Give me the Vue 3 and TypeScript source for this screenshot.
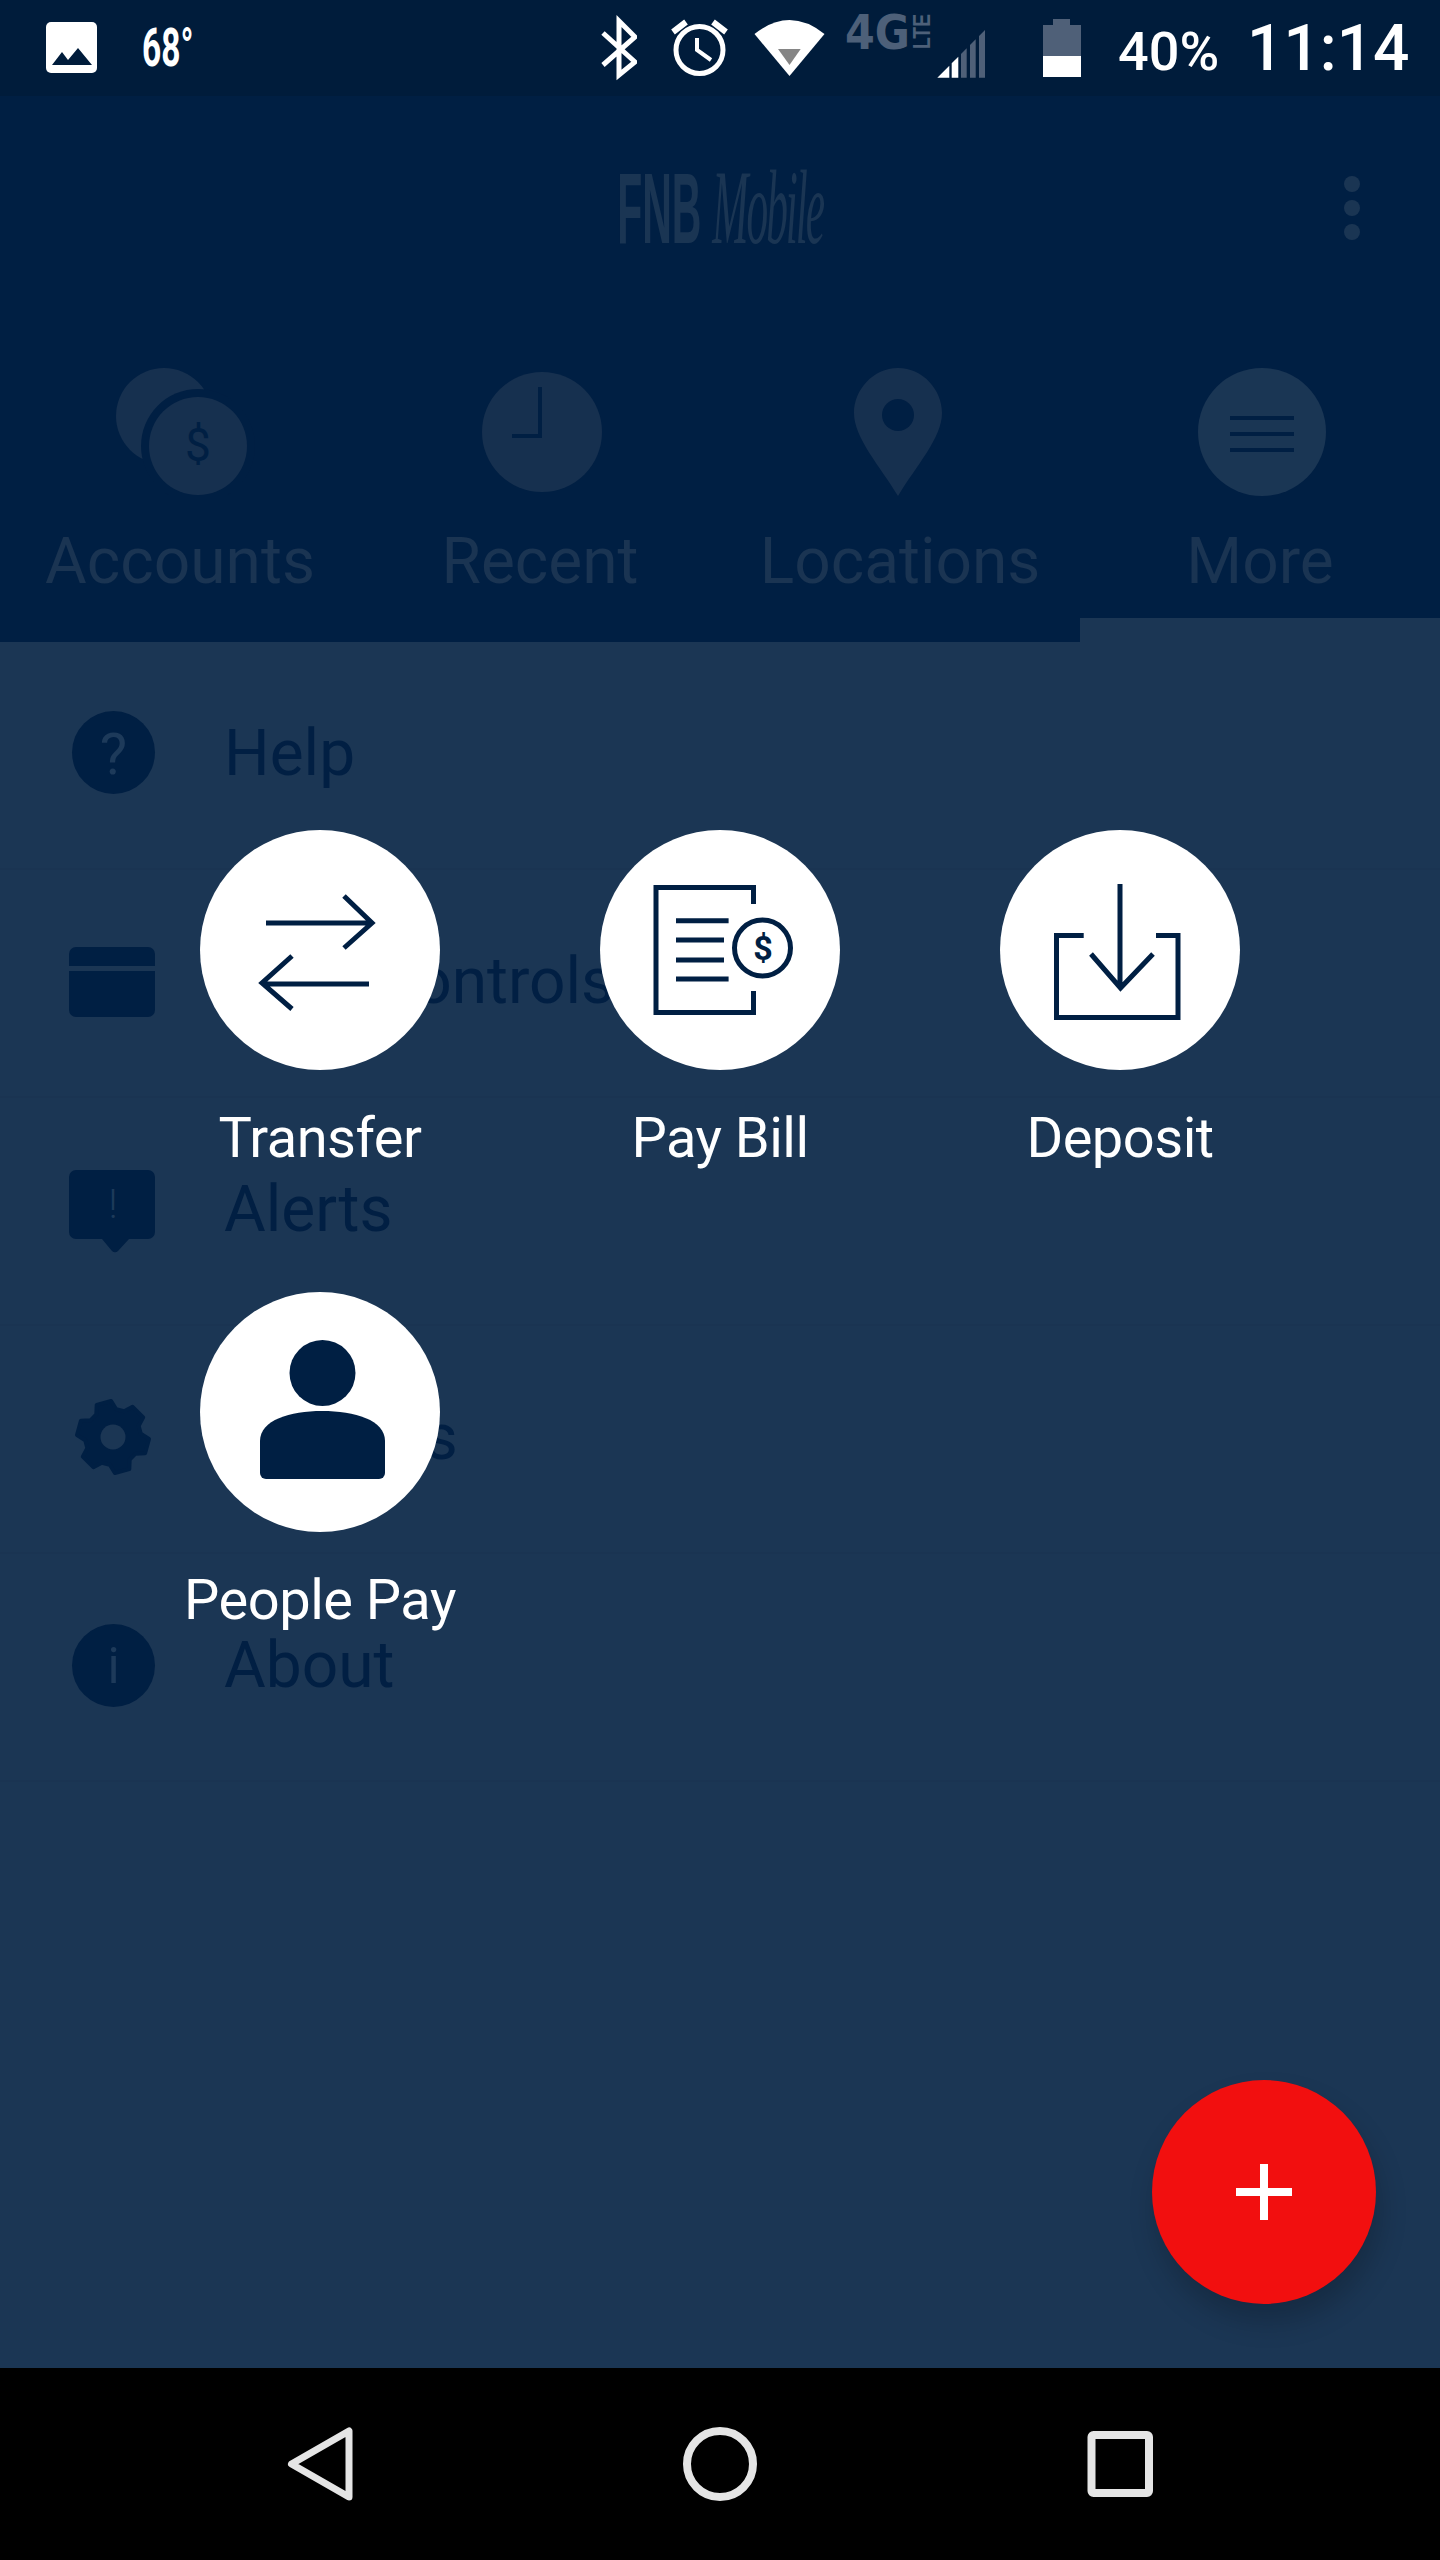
<script setup lang="ts">
interface Action {
  label: string;
}

const actions: Action[] = [
  { label: "Transfer" },
  { label: "Pay Bill" },
  { label: "Deposit" },
  { label: "People Pay" },
];

function gearPath(cx: number, cy: number, outer: number, inner: number, teeth: number, offset: number): string {
  const step = 360 / teeth;
  const points: string[] = [];
  for (let i = 0; i < teeth; i++) {
    const a = offset + i * step;
    const stops: [number, number][] = [
      [a - step * 0.36, inner],
      [a - step * 0.2, outer],
      [a + step * 0.2, outer],
      [a + step * 0.36, inner],
    ];
    for (const [deg, r] of stops) {
      const rad = (deg * Math.PI) / 180;
      points.push(`${(cx + r * Math.cos(rad)).toFixed(1)} ${(cy + r * Math.sin(rad)).toFixed(1)}`);
    }
  }
  return `M${points.join(" L")} Z`;
}

const gear = gearPath(113, 1437, 36, 28, 6, 15);
</script>

<template>
  <div class="screen">
    <header class="status">
      <svg class="s-photo" width="51" height="96" viewBox="46 0 51 96">
        <rect x="46" y="22" width="51" height="51" rx="5" fill="#fff" />
        <path d="M52 65 L62 52 L68 60 L78 48 L92 65 Z" fill="#001c3b" />
      </svg>
      <span class="temp">68°</span>
      <span class="status-gap"></span>
      <svg class="s-bt" width="36" height="96" viewBox="601 0 36 96">
        <path d="M603 33 L635 62 L619 75 L619 21 L635 37 L603 65" fill="none" stroke="#fff" stroke-width="5" />
      </svg>
      <svg class="s-alarm" width="58" height="96" viewBox="670 0 58 96">
        <circle cx="699.5" cy="50" r="23.5" fill="none" stroke="#fff" stroke-width="5" />
        <path d="M697 38 V50 L711 60" fill="none" stroke="#fff" stroke-width="4" />
        <path d="M673 32 L686 22 M713 22 L726 32" fill="none" stroke="#fff" stroke-width="6" />
      </svg>
      <svg class="s-wifi" width="72" height="96" viewBox="754 0 72 96">
        <path d="M754.5 34 Q789.5 6 824.5 34 L789.5 76 Z" fill="#fff" />
        <path d="M778 49 H800.7 L789.5 65 Z" fill="#858585" />
      </svg>
      <svg class="s-net" width="142" height="96" viewBox="844 0 142 96">
        <text x="845" y="49" class="net-main" textLength="65" lengthAdjust="spacingAndGlyphs">4G</text>
        <text transform="translate(930 49) rotate(-90)" class="net-sub" textLength="35" lengthAdjust="spacingAndGlyphs">LTE</text>
        <path d="M937.3 77.7 L949.3 65.7 V77.7 Z M951.7 63.3 L958.3 56.7 V77.7 H951.7 Z" fill="#fff" />
        <path d="M961 54 L966.7 48.3 V77.7 H961 Z M970 45 L975.7 39.3 V77.7 H970 Z M979 36 L985 30 V77.7 H979 Z" fill="#4f6078" />
      </svg>
      <svg class="s-batt" width="38" height="96" viewBox="1043 0 38 96">
        <path d="M1053 19 H1070 V25 H1081 V56 H1043 V25 H1053 Z" fill="#4f6078" />
        <rect x="1043" y="56" width="38" height="21" fill="#fff" />
      </svg>
      <span class="pct">40%</span>
      <span class="clock">11:14</span>
    </header>

    <main class="main">
      <div class="topbar">
        <span class="brand"><span class="brand-a">FNB</span> <span class="brand-b">Mobile</span></span>
        <span class="dots"><i></i><i></i><i></i></span>
      </div>

      <nav class="tabs">
        <div class="tab">
          <svg width="360" height="128" viewBox="0 368 360 128">
            <circle cx="164" cy="416" r="48" fill="#16304f" />
            <circle cx="198" cy="446" r="57" fill="#001f43" />
            <circle cx="198" cy="446" r="49" fill="#16304f" />
            <text x="198" y="461" class="coin-d">$</text>
          </svg>
          <span class="tab-label">Accounts</span>
        </div>
        <div class="tab">
          <svg width="360" height="128" viewBox="360 368 360 128">
            <circle cx="542" cy="432" r="60" fill="#16304f" />
            <path d="M540 387 V436 H512" fill="none" stroke="#001f43" stroke-width="4" />
          </svg>
          <span class="tab-label">Recent</span>
        </div>
        <div class="tab">
          <svg width="360" height="128" viewBox="720 368 360 128">
            <path d="M898 368 C873 368 854 390 854 413 C854 438 880 466 898 496 C916 466 942 438 942 413 C942 390 923 368 898 368 Z" fill="#16304f" />
            <circle cx="898" cy="415" r="16" fill="#001f43" />
          </svg>
          <span class="tab-label">Locations</span>
        </div>
        <div class="tab tab-on">
          <svg width="360" height="128" viewBox="1080 368 360 128">
            <circle cx="1262" cy="432" r="64" fill="#1a3654" />
            <path d="M1230 418 H1294 M1230 434 H1294 M1230 450 H1294" stroke="#001f43" stroke-width="4" />
          </svg>
          <span class="tab-label">More</span>
        </div>
      </nav>

      <section class="list">
        <div class="row">
          <svg width="224" height="228" viewBox="0 642 224 228">
            <circle cx="113.5" cy="752.5" r="41.5" fill="#001f43" />
            <text x="113.5" y="774" class="glyph glyph-q">?</text>
          </svg>
          <span class="row-label">Help</span>
        </div>
        <div class="row">
          <svg width="224" height="228" viewBox="0 870 224 228">
            <rect x="69" y="947" width="86" height="70" rx="7" fill="#001f43" />
            <rect x="69" y="966" width="86" height="5" fill="#1b3654" />
          </svg>
          <span class="row-label">Card Controls</span>
        </div>
        <div class="row">
          <svg width="224" height="228" viewBox="0 1098 224 228">
            <path d="M76 1170 H148 a7 7 0 0 1 7 7 V1232 a7 7 0 0 1 -7 7 H129 L118 1251 a4 4 0 0 1 -6 0 L102 1239 H76 a7 7 0 0 1 -7 -7 V1177 a7 7 0 0 1 7 -7 Z" fill="#001f43" />
            <text x="113" y="1218" class="glyph glyph-b">!</text>
          </svg>
          <span class="row-label">Alerts</span>
        </div>
        <div class="row">
          <svg width="224" height="228" viewBox="0 1326 224 228">
            <path :d="gear" fill="#001f43" stroke="#001f43" stroke-width="4" stroke-linejoin="round" />
            <circle cx="113" cy="1437" r="12.5" fill="#1b3654" />
          </svg>
          <span class="row-label">Settings</span>
        </div>
        <div class="row">
          <svg width="224" height="228" viewBox="0 1554 224 228">
            <circle cx="113.5" cy="1665.5" r="41.5" fill="#001f43" />
            <text x="113.5" y="1683" class="glyph glyph-i">i</text>
          </svg>
          <span class="row-label">About</span>
        </div>
      </section>

      <div class="actions">
        <div v-for="action in actions" :key="action.label" class="action">
          <div class="bubble">
            <svg v-if="action.label === 'Transfer'" width="240" height="240" viewBox="200 830 240 240">
              <path d="M266 923 H372 M344 896 L372 923 L344 948 M369 984 H262 M292 956 L262 983 L292 1009" fill="none" stroke="#001f43" stroke-width="5" />
            </svg>
            <svg v-else-if="action.label === 'Pay Bill'" width="240" height="240" viewBox="600 830 240 240">
              <path d="M753.5 904 V887.5 H656 V1012.5 H753.5 V991" fill="none" stroke="#001f43" stroke-width="5" />
              <path d="M676 920.7 H728.6 M676 940 H724 M676 960 H724 M676 979 H728.6" fill="none" stroke="#001f43" stroke-width="5" />
              <circle cx="762.5" cy="948" r="28" fill="none" stroke="#001f43" stroke-width="5" />
              <text x="763" y="960" class="bill-d">$</text>
            </svg>
            <svg v-else-if="action.label === 'Deposit'" width="240" height="240" viewBox="1000 830 240 240">
              <path d="M1120 884 V988 M1091 954 L1120.5 988 L1153 954" fill="none" stroke="#001f43" stroke-width="5" />
              <path d="M1083.7 935.5 H1056.5 V1017.5 H1178 V935.5 H1156" fill="none" stroke="#001f43" stroke-width="5" />
            </svg>
            <svg v-else width="240" height="240" viewBox="200 1292 240 240">
              <circle cx="322.5" cy="1373" r="33" fill="#001f43" />
              <path d="M260 1441 C260 1420 290 1411 322 1411 C355 1411 385 1420 385 1441 V1473 a6 6 0 0 1 -6 6 H266 a6 6 0 0 1 -6 -6 Z" fill="#001f43" />
            </svg>
          </div>
          <span class="action-label">{{ action.label }}</span>
        </div>
      </div>

      <button class="fab" type="button" aria-label="Add">
        <svg width="56" height="56" viewBox="0 0 56 56">
          <path d="M24 0 H32 V24 H56 V32 H32 V56 H24 V32 H0 V24 H24 Z" fill="#fff" />
        </svg>
      </button>
    </main>

    <footer class="navbar">
      <svg width="400" height="192" viewBox="120 2368 400 192">
        <path d="M349 2431 V2497 L291.5 2464 Z" fill="none" stroke="#e5e5e5" stroke-width="7" stroke-linejoin="round" />
      </svg>
      <svg width="400" height="192" viewBox="520 2368 400 192">
        <circle cx="720" cy="2464" r="33" fill="none" stroke="#e5e5e5" stroke-width="8" />
      </svg>
      <svg width="400" height="192" viewBox="920 2368 400 192">
        <rect x="1091.5" y="2435" width="57.5" height="58" rx="2" fill="none" stroke="#e5e5e5" stroke-width="8" />
      </svg>
    </footer>
  </div>
</template>

<style scoped>
.screen {
  width: 1440px;
  height: 2560px;
  display: flex;
  flex-direction: column;
  overflow: hidden;
  background: #1b3654;
  font-family: Roboto, "Liberation Sans", sans-serif;
}

svg {
  display: block;
  flex: none;
}

.status {
  height: 96px;
  flex: none;
  display: flex;
  align-items: center;
  padding-left: 46px;
  background: #001c3b;
  color: #fff;
}

.temp {
  margin-left: 45px;
  width: 51px;
  font-size: 54px;
  font-weight: 700;
  line-height: 96px;
  white-space: nowrap;
  transform: scaleX(0.62);
  transform-origin: left center;
}

.status-gap {
  flex: 1;
}

.s-alarm {
  margin-left: 33px;
}

.s-wifi {
  margin-left: 26px;
}

.s-net {
  margin-left: 18px;
}

.net-main {
  font-family: "DejaVu Sans", sans-serif;
  font-size: 48px;
  font-weight: 700;
  fill: #4d6079;
}

.net-sub {
  font-family: "Liberation Sans", sans-serif;
  font-size: 23px;
  font-weight: 700;
  fill: #4d6079;
}

.s-batt {
  margin-left: 57px;
}

.pct {
  margin-left: 37px;
  width: 99px;
  font-size: 54px;
  font-weight: 500;
  white-space: nowrap;
  padding-top: 6px;
}

.clock {
  margin-left: 30px;
  width: 193px;
  font-size: 64px;
  font-weight: 500;
  white-space: nowrap;
}

.main {
  flex: 1;
  position: relative;
  display: flex;
  flex-direction: column;
  min-height: 0;
}

.topbar {
  height: 224px;
  flex: none;
  position: relative;
  display: flex;
  align-items: center;
  justify-content: center;
  background: #001f43;
}

.brand {
  font-family: "Liberation Serif", serif;
  font-size: 106px;
  color: #1a3553;
  white-space: nowrap;
  transform: scaleX(0.41);
}

.brand-a {
  font-family: "Liberation Sans", sans-serif;
  font-size: 100px;
  font-weight: 700;
}

.brand-b {
  font-style: italic;
  letter-spacing: -5px;
}

.dots {
  position: absolute;
  right: 80px;
  top: 80px;
  display: flex;
  flex-direction: column;
  gap: 8px;
}

.dots i {
  display: block;
  width: 16px;
  height: 16px;
  border-radius: 50%;
  background: #1a3553;
}

.tabs {
  height: 322px;
  flex: none;
  display: grid;
  grid-template-columns: repeat(4, 360px);
  background: #001f43;
}

.tab {
  padding-top: 48px;
  display: flex;
  flex-direction: column;
  align-items: center;
}

.tab-on {
  border-bottom: 24px solid #1b3654;
}

.tab-label {
  margin-top: 28px;
  font-size: 64px;
  color: #1a3452;
  white-space: nowrap;
}

.coin-d {
  font-family: Roboto, sans-serif;
  font-size: 46px;
  text-anchor: middle;
  fill: #001f43;
}

.list {
  flex: 1;
  display: flex;
  flex-direction: column;
}

.row {
  height: 228px;
  flex: none;
  display: flex;
  box-shadow: inset 0 -2px 0 #1a3452;
}

.row-label {
  align-self: center;
  padding-bottom: 6px;
  font-size: 64px;
  color: #011f43;
  white-space: nowrap;
}

.glyph {
  font-family: Roboto, sans-serif;
  text-anchor: middle;
  fill: #1d3a5a;
}

.glyph-q {
  font-size: 58px;
}

.glyph-b {
  font-size: 40px;
  font-weight: 300;
}

.glyph-i {
  font-size: 50px;
}

.actions {
  position: absolute;
  left: 120px;
  top: 734px;
  display: grid;
  grid-template-columns: repeat(3, 400px);
  row-gap: 121px;
}

.action {
  display: flex;
  flex-direction: column;
  align-items: center;
}

.bubble {
  width: 240px;
  height: 240px;
  border-radius: 50%;
  background: #fff;
}

.bill-d {
  font-family: Roboto, sans-serif;
  font-size: 34px;
  font-weight: 700;
  text-anchor: middle;
  fill: #001f43;
}

.action-label {
  margin-top: 35px;
  font-size: 56px;
  letter-spacing: -0.5px;
  color: #fff;
  white-space: nowrap;
}

.fab {
  position: absolute;
  right: 64px;
  bottom: 64px;
  width: 224px;
  height: 224px;
  padding: 0;
  border: 0;
  border-radius: 50%;
  display: flex;
  align-items: center;
  justify-content: center;
  background: #f20f0f;
  box-shadow: 4px 18px 28px rgba(0, 0, 0, 0.2);
}

.navbar {
  height: 192px;
  flex: none;
  display: flex;
  padding-left: 120px;
  background: #000;
}
</style>
